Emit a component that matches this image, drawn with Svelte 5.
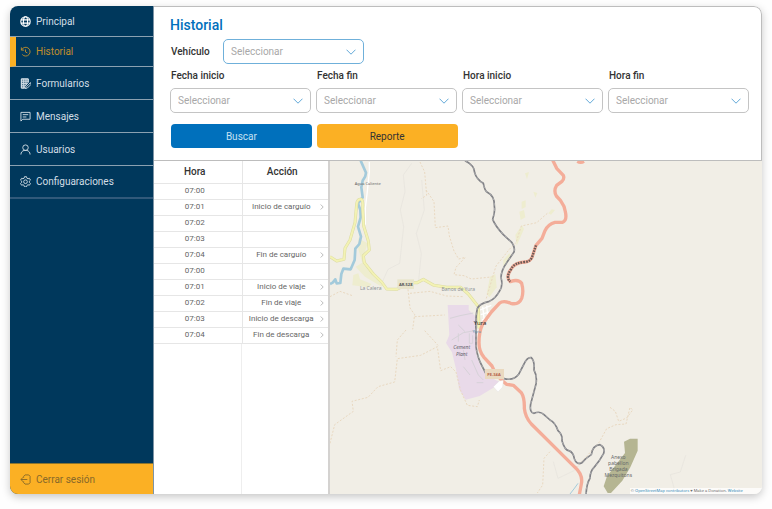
<script>
  const nav = [
    { id: 'principal', label: 'Principal' },
    { id: 'historial', label: 'Historial' },
    { id: 'formularios', label: 'Formularios' },
    { id: 'mensajes', label: 'Mensajes' },
    { id: 'usuarios', label: 'Usuarios' },
    { id: 'config', label: 'Configuaraciones' }
  ];
  const filters = [
    { id: 'fecha-inicio', label: 'Fecha inicio' },
    { id: 'fecha-fin', label: 'Fecha fin' },
    { id: 'hora-inicio', label: 'Hora inicio' },
    { id: 'hora-fin', label: 'Hora fin' }
  ];
  const rows = [
    ['07:00', ''],
    ['07:01', 'Inicio de carguío'],
    ['07:02', ''],
    ['07:03', ''],
    ['07:04', 'Fin de carguío'],
    ['07:00', ''],
    ['07:01', 'Inicio de viaje'],
    ['07:02', 'Fin de viaje'],
    ['07:03', 'Inicio de descarga'],
    ['07:04', 'Fin de descarga']
  ];

  const road =
    'M668 0 L680 25 L700 46 Q704 56 696 64 L680 76 Q670 92 679 108 L692 122 Q704 138 706 155 Q712 182 697 187 L675 187 Q655 192 645 212 L636 235 L618 256 L606 292 Q600 305 585 306 Q552 308 543 328 Q526 352 541 365 Q565 356 575 370 Q582 395 575 415 Q566 436 542 430 Q520 420 508 430 L484 456 L458 492 Q447 515 447 548 Q447 574 462 592 L486 618 Q498 650 530 673 L550 676 L574 698 Q584 714 583 745 Q586 772 604 792 L735 922 Q760 945 754 972 L748 1004';
  const rail =
    'M405 2 Q434 16 434 38 Q440 58 460 70 Q464 92 472 97 Q494 108 493 138 Q496 156 488 178 Q496 198 520 224 L546 248 Q556 262 552 276 L530 308 Q514 330 513 352 Q520 380 508 394 Q496 416 478 424 Q448 430 442 446 Q436 470 438 510 L438 560 Q442 592 456 618 L470 645 L520 655 Q550 664 566 643 L582 612 Q592 590 604 593 Q614 602 612 630 Q622 648 618 672 L602 732 Q598 758 612 760 Q630 752 642 764 L660 780 Q676 788 684 812 Q698 824 696 842 Q704 870 716 872 Q730 876 733 896 Q740 916 756 908 Q768 894 784 884 Q788 856 810 854 Q826 862 821 880 Q808 904 794 920 Q780 934 780 955 Q770 970 768 1004';
  const yellow =
    'M0 290 L20 303 L42 298 L45 265 L60 240 L75 188 L80 132 Q82 116 94 118 Q100 122 98 145 L101 198 L115 243 L118 270 L100 287 L103 308 L130 342 L155 366 L170 387 L200 388 L240 368 L262 368 L280 358 L312 376 L350 382 L392 382 L415 402 L445 440 L447 505';
  const river =
    'M92 2 L108 38 Q108 50 98 62 L94 82 L98 112 L84 130 L91 150 L92 172 L84 200 L93 230 L88 252 L76 266 L74 300 L62 328 L40 326 L34 342 L31 369 L20 370 L16 358 L8 368 L0 372';
</script>

{#snippet chevron()}
  <svg class="chevron" viewBox="0 0 10 6" aria-hidden="true"><path d="M0.5 0.7 5 5.2 9.5 0.7" /></svg>
{/snippet}

{#snippet picker(id, blue)}
  <div class="picker">
    <select {id} class:blue><option>Seleccionar</option></select>
    {@render chevron()}
  </div>
{/snippet}

<div class="app">
  <aside>
    <nav>
      {#each nav as item}
        <a href="#{item.id}" class:active={item.id === 'historial'}>
          <svg class="icon" viewBox="0 0 24 24" aria-hidden="true">
            {#if item.id === 'principal'}
              <g stroke="#fff" stroke-width="2.4">
                <circle cx="12" cy="12" r="10.3" />
                <ellipse cx="12" cy="12" rx="4.6" ry="10.3" />
                <path d="M2 8.5h20M2 15.5h20" />
              </g>
            {:else if item.id === 'historial'}
              <path d="M3 3v6h6M3.4 9A9.6 9.6 0 1 1 5 18.5M12 7.5V13l4 2" />
            {:else if item.id === 'formularios'}
              <path fill="#fff" fill-opacity=".35" d="M3 2h15v8l-8 9v3H3z" />
              <path d="M3 2h15v7M3 2v20h7M3 7h15M3 12h12M3 17h9M8 2v20M13 2v12M23 10l-9 9-3 4 5-1 8-8z" />
            {:else if item.id === 'mensajes'}
              <path d="M2 22V3h20v15H6zM6 8h12M6 13h8" />
            {:else if item.id === 'usuarios'}
              <circle cx="12" cy="8" r="6" />
              <path d="M2 23c0-5 3-8 7-9h6c4 1 7 4 7 9" />
            {:else}
              <path d="M9.8 1.5h4.4l.8 3.2 2.4 1.4 3.2-1 2.2 3.9-2.4 2.2v2.8l2.4 2.2-2.2 3.9-3.2-1-2.4 1.4-.8 3.2H9.8l-.8-3.2-2.4-1.4-3.2 1-2.2-3.9L3.6 14v-2.8L1.2 9l2.2-3.9 3.2 1L9 4.7z" />
              <circle cx="12" cy="12.5" r="4" />
            {/if}
          </svg>
          {item.label}
        </a>
      {/each}
    </nav>
    <button class="logout">
      <svg class="icon" viewBox="0 0 24 24" aria-hidden="true">
        <path d="M8 8V5l3-3h8l3 3v14l-3 3h-8l-3-3v-3M16 12H2M7 7l-5 5 5 5" />
      </svg>
      Cerrar sesión
    </button>
  </aside>

  <main>
    <form onsubmit={(e) => e.preventDefault()}>
      <h1>Historial</h1>
      <div class="vehicle">
        <label for="vehiculo">Vehículo</label>
        {@render picker('vehiculo', true)}
      </div>
      <div class="filters">
        {#each filters as f}
          <div class="field">
            <label for={f.id}>{f.label}</label>
            {@render picker(f.id, false)}
          </div>
        {/each}
      </div>
      <div class="actions">
        <button class="search" type="submit">Buscar</button>
        <button class="report" type="button">Reporte</button>
      </div>
    </form>

    <div class="content">
      <div class="log">
        <table>
          <thead><tr><th>Hora</th><th>Acción</th></tr></thead>
          <tbody>
            {#each rows as [time, action]}
              <tr>
                <td>{time}</td>
                <td>
                  {#if action}
                    <div class="action">
                      <span>{action}</span>
                      <button aria-label="Ver {action}">
                        <svg viewBox="0 0 4 6" aria-hidden="true"><path d="M0.7 0.5 3.2 3 0.7 5.5" /></svg>
                      </button>
                    </div>
                  {/if}
                </td>
              </tr>
            {/each}
          </tbody>
        </table>
        <div class="rest"></div>
      </div>

      <div class="map">
        <svg viewBox="0 3 1296 999" preserveAspectRatio="xMinYMin slice" role="img" aria-label="Mapa de Yura">
          <g fill="#eeedcf">
            <path d="M85 235l28 15-12 38 10 30 50 50-6 12-50-30-28-30 20-12-12-40z" />
            <path d="M70 345l15-5 5 18 35 14-8 10-50-6z" />
            <path d="M575 125l12-4v20l-12 6zM568 155l14-5 4 22-14 8zM610 95l12 4-6 14zM585 40l12-4-6 22zM556 225l20-30 6 12-22 50zM520 300l18-20 6 6-24 34zM655 160l10-12 10 2-12 14z" />
            <path d="M480 350l16-8 4 40-22 30-8-10z" />
          </g>
          <path fill="#e9dae9" d="M353 435h63v15l22 20v110l16 48 35 28 28 14-28 14-40 24-42 11-20-32-9-60-12-50-18-28 10-24z" />
          <g class="plant">
            <path d="M360 475l30-8 40-8M365 540l35-22 35-6M385 545v-25M418 520v30h10v-24M400 620l20 25M425 600l20 45 15 15M405 600l-5-30M440 668h20M405 515l-20-20" />
          </g>
          <g class="streets">
            <path d="M118 6v28l-6 60-6 50v50" />
            <path d="M450 450l34-14M452 464l32-10M456 480l22-10M458 440l6 50M470 436l4 44" />
          </g>
          <g class="faint">
            <path d="M245 10l-25 35 5 50-14 55 10 50-12 110-35 18-18 40M275 60l8 90-24 70 15 60-8 80M670 905l14 50 50-24M1067 886l-16 50-30 8 14 50" />
          </g>
          <g class="trail">
            <path d="M270 6l14 30 6 70-16 10M288 90l24 35 4 78 38-5 4 30 14 45 14 24 20-5-28 30-6 22 30 3 22 10 60-6M0 410l30-16 40 14M234 388l6 56 14 20-6 44M254 470l90-5M240 400l60-6 50 14 50 2M652 160l-32 28-46 10-16 50-20 20-40 50-30 100" />
            <path d="M0 850l14-56 56-40-4-30 48-12 30-32 50-14 8-70 70-10 50-26 10 72 30-12 16 16 14 56 20 44 30 4 6-20M228 510l-26 30-4 50M284 512l40 44M660 875l-18 20-4 80-16 24" />
            <path d="M840 742l16 12 10 30 24-10 18-24-8-8-12 50-30 2-28 12-22 40-40 45-26 30" />
          </g>
          <path fill="#b5b592" d="M882 845l18-9h23v36l-22 50-24 40-34 37h-10l-12-20 10-30 54-70z" />
          <path class="river" d={river} />
          <path class="river thin" d="M744 970l-10 14-14 18" />
          <path class="yellow-edge" d={yellow} />
          <path class="yellow" d={yellow} />
          <path class="rail" d={rail} />
          <path class="rail-dash" d={rail} />
          <path class="road" d={road} />
          <path class="road" d="M742 4q10 6 20 0" />
          <path class="bridge" d="M618 256 L606 292 Q600 305 585 306 Q552 308 543 328 Q526 352 541 365" />
          <path fill="#fff" stroke="#dcdcd8" d="M490 680l18-17 12-2-2 20-14 15z" />
          <rect x="202" y="358" width="50" height="29" fill="#e8e4cb" />
          <rect x="465" y="627" width="57" height="30" fill="#ead9c0" />
          <rect x="900" y="984" width="396" height="18" fill="#fff" fill-opacity=".75" />
          <g class="names">
            <text x="113" y="75">Agua Caliente</text>
            <text class="soft" x="122" y="390">La Calera</text>
            <text class="soft" x="385" y="394">Banos de Yura</text>
            <text class="town" x="450" y="495">Yura</text>
            <text class="cement" x="395" y="567">Cement</text>
            <text class="cement" x="395" y="588">Plant</text>
            <text class="shield" x="227" y="377">AR-528</text>
            <text class="shield salmon" x="492" y="647">PE-34A</text>
            <text class="station" x="440" y="518">Yura</text>
            <text class="bank" x="865" y="897">Anexo</text>
            <text class="bank" x="865" y="915">pabellon</text>
            <text class="bank" x="865" y="933">Brigada</text>
            <text class="bank" x="865" y="951">Mezquitons</text>
          </g>
          <text class="credit" x="902" y="996">© <tspan>OpenStreetMap contributors</tspan> ♥ Make a Donation. <tspan>Website</tspan></text>
        </svg>
      </div>
    </div>
  </main>
</div>

<style>
  :global(body) {
    background: #fefefe;
  }
  * {
    box-sizing: border-box;
  }
  .app {
    display: flex;
    min-height: calc(100vh - 21px);
    margin: 6px 10px 15px;
    overflow: hidden;
    border-radius: 8px;
    background: #fff;
    box-shadow: 0 3px 8px rgba(0, 0, 0, 0.22);
    color: #333;
    font-family: Roboto, 'Liberation Sans', sans-serif;
    font-size: 10px;
  }
  button,
  select {
    font: inherit;
  }
  aside {
    display: flex;
    flex: none;
    flex-direction: column;
    justify-content: space-between;
    width: 144px;
    border-right: 1px solid #7e94a5;
    background: #00385c;
  }
  nav {
    padding-top: 1px;
  }
  nav a {
    display: flex;
    align-items: center;
    gap: 5px;
    height: 33px;
    padding-left: 10px;
    border-bottom: 1px solid #8ba1b1;
    color: #d3dee6;
    text-decoration: none;
  }
  nav a:nth-child(-n + 2) {
    height: 30px;
  }
  nav a.active {
    padding-left: 4px;
    border-left: 6px solid #fbb024;
    color: #c08e2c;
  }
  nav a:last-child {
    border-bottom: 2px solid #31597a;
  }
  .icon {
    flex: none;
    width: 11px;
    height: 11px;
    fill: none;
    stroke: currentColor;
    stroke-width: 2;
  }
  .logout {
    display: flex;
    align-items: center;
    gap: 5px;
    height: 31px;
    padding: 0 0 0 10px;
    border: 0;
    border-top: 1px solid #8a742f;
    background: #fbb024;
    color: #87692a;
  }
  main {
    display: flex;
    flex: 1;
    flex-direction: column;
    min-width: 0;
  }
  form {
    display: flex;
    flex-direction: column;
    height: 155px;
    padding: 9px 12px 0 16px;
    border: 1px solid #bdbdbd;
    border-left: 0;
    border-top-right-radius: 8px;
  }
  h1 {
    margin: 0;
    color: #0070bc;
    font-size: 14px;
    font-weight: 500;
    line-height: 18px;
  }
  label {
    padding-left: 1px;
    font-weight: 500;
    line-height: 14px;
  }
  .vehicle {
    display: grid;
    grid-template-columns: 53px 141px;
    align-items: center;
    margin-top: 5px;
  }
  .picker {
    position: relative;
  }
  select {
    display: block;
    width: 100%;
    height: 25px;
    padding: 0 7px;
    appearance: none;
    border: 1px solid #c4c4c4;
    border-radius: 5px;
    background: #fff;
    color: #a8a8a8;
  }
  select.blue {
    border-color: #6fb0da;
  }
  .chevron {
    position: absolute;
    top: 10px;
    right: 8px;
    width: 10px;
    height: 6px;
    fill: none;
    stroke: #62a9d8;
    pointer-events: none;
  }
  .filters,
  .actions {
    display: grid;
    grid-template-columns: repeat(4, 1fr);
    gap: 5px;
  }
  .filters {
    margin-top: 5px;
  }
  .field label {
    display: block;
    margin-bottom: 5px;
  }
  .actions {
    margin-top: 11px;
    padding-left: 1px;
  }
  .actions button {
    height: 24px;
    border: 0;
    border-radius: 4px;
  }
  .search {
    background: #0070bc;
    color: #c6e0f2;
  }
  .report {
    background: #fbb024;
    color: #333;
  }
  .content {
    display: flex;
    flex: 1;
  }
  .log {
    display: flex;
    flex: none;
    flex-direction: column;
    width: 176px;
    border-right: 2px solid #d4d2d0;
  }
  table {
    width: 100%;
    border-collapse: collapse;
    table-layout: fixed;
    font-size: 8px;
  }
  th,
  td {
    height: 16px;
    padding: 0;
    border-bottom: 1px solid #e6e6e6;
    color: #666;
    line-height: 10px;
    text-align: center;
  }
  th {
    height: 22px;
    padding-right: 6px;
    color: #333;
    font-size: 10px;
    font-weight: 500;
  }
  th:first-child,
  td:first-child {
    width: 88px;
    padding-right: 6px;
    border-right: 1px solid #e6e6e6;
  }
  .action {
    display: flex;
    align-items: center;
  }
  .action span {
    flex: 1;
    white-space: nowrap;
  }
  .action button {
    display: flex;
    padding: 0 4px 0 0;
    border: 0;
    background: none;
  }
  .action svg {
    width: 4px;
    height: 6px;
    fill: none;
    stroke: #aaa;
    stroke-width: 0.8;
  }
  .rest {
    flex: 1;
    width: 88px;
    border-right: 1px solid #eee;
  }
  .map {
    position: relative;
    flex: 1;
    min-width: 0;
    background: #f1eee6;
  }
  .map > svg {
    position: absolute;
    inset: 0;
    width: 100%;
    height: 100%;
  }
  .map path {
    stroke-linejoin: round;
  }
  .plant path,
  .streets path,
  .faint path,
  .trail path,
  .river,
  .yellow-edge,
  .yellow,
  .rail,
  .rail-dash,
  .road,
  .bridge {
    fill: none;
  }
  .plant {
    stroke: #d6d2d8;
    stroke-width: 3;
  }
  .streets {
    stroke: #fff;
    stroke-width: 4;
  }
  .faint {
    stroke: #e6e3dd;
    stroke-width: 2;
  }
  .trail {
    stroke: #e9d8c0;
    stroke-width: 3;
    stroke-dasharray: 6 5;
  }
  .river {
    stroke: #a3cadb;
    stroke-width: 8;
  }
  .river.thin {
    stroke-width: 3;
  }
  .yellow-edge {
    stroke: #dcdca2;
    stroke-width: 9;
  }
  .yellow {
    stroke: #f3f2b4;
    stroke-width: 6;
  }
  .rail {
    stroke: #808186;
    stroke-width: 5;
  }
  .rail-dash {
    stroke: #c4c4c4;
    stroke-width: 2;
    stroke-dasharray: 8 8;
  }
  .road {
    stroke: #f4ad99;
    stroke-width: 10;
  }
  .bridge {
    stroke: #6b5a55;
    stroke-width: 7;
    stroke-dasharray: 5 3;
  }
  .names text {
    fill: #666;
    font-family: 'Noto Sans', sans-serif;
    font-size: 12px;
    text-anchor: middle;
  }
  .names .soft {
    fill: #8f9498;
    font-size: 15px;
  }
  .names .town {
    fill: #222;
    font-size: 18px;
  }
  .names .cement {
    fill: #62606a;
    font-size: 15px;
    font-style: italic;
  }
  .names .shield {
    fill: #555;
    font-size: 12px;
    font-weight: 700;
  }
  .names .salmon {
    fill: #b5604a;
  }
  .names .station {
    fill: #5b8fb0;
  }
  .names .bank {
    fill: #66696a;
    font-size: 15px;
  }
  .credit {
    fill: #666;
    font-family: 'Noto Sans', sans-serif;
    font-size: 12px;
  }
  .credit tspan {
    fill: #2f88b8;
  }
</style>
